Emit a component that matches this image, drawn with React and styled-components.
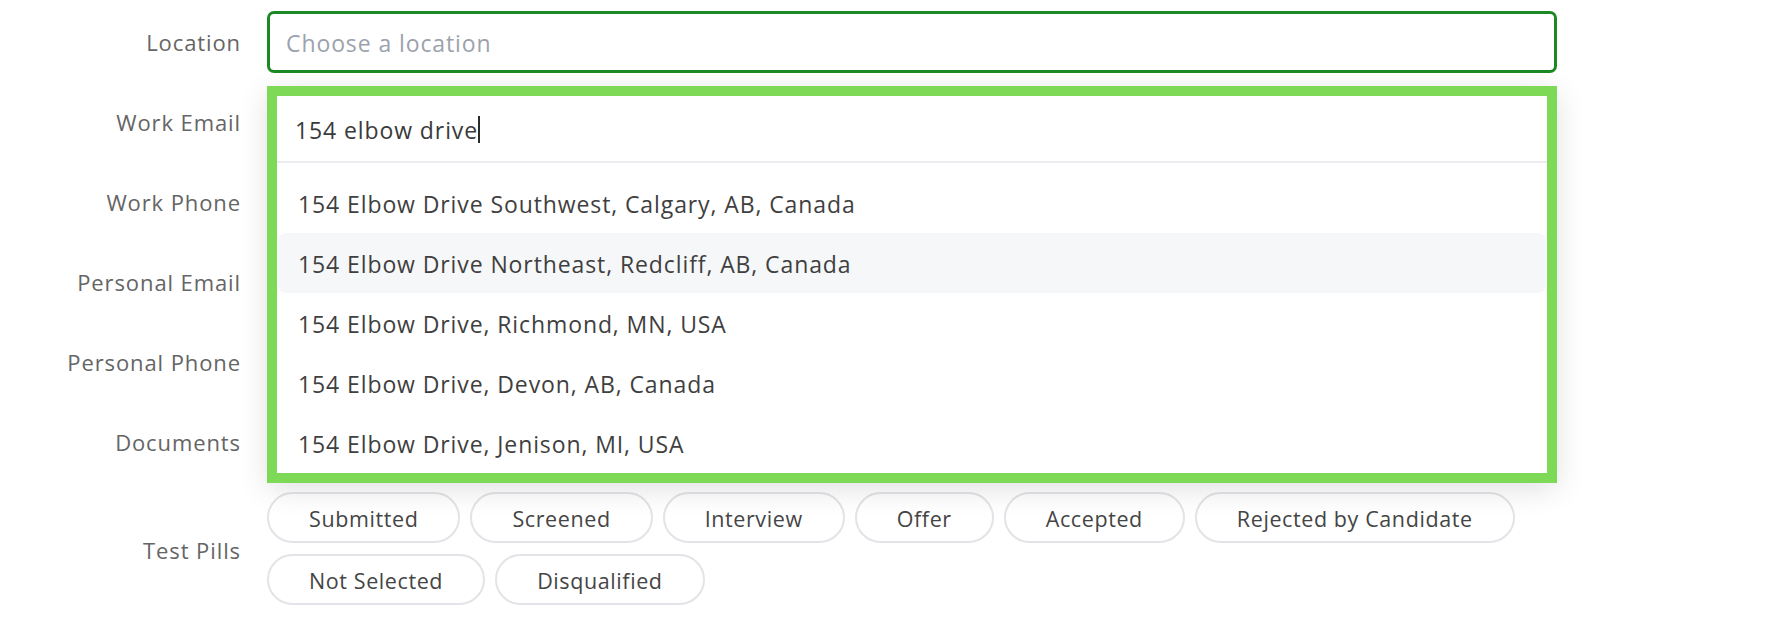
import styled, { createGlobalStyle } from 'styled-components';

const suggestions = [
  '154 Elbow Drive Southwest, Calgary, AB, Canada',
  '154 Elbow Drive Northeast, Redcliff, AB, Canada',
  '154 Elbow Drive, Richmond, MN, USA',
  '154 Elbow Drive, Devon, AB, Canada',
  '154 Elbow Drive, Jenison, MI, USA',
];

const pills = [
  'Submitted',
  'Screened',
  'Interview',
  'Offer',
  'Accepted',
  'Rejected by Candidate',
  'Not Selected',
  'Disqualified',
];

const hiddenFields = ['Work Email', 'Work Phone', 'Personal Email', 'Personal Phone', 'Documents'];

export default function App() {
  return (
    <>
      <GlobalStyle />
      <FormStyled>
        <RowStyled>
          <LabelStyled>Location</LabelStyled>
          <FieldStyled>
            <LocationInput placeholder="Choose a location" readOnly />
            <DropdownStyled>
              <SearchStyled>
                154 elbow drive
                <CaretStyled />
              </SearchStyled>
              <ListStyled>
                {suggestions.map((el, idx) => (
                  <OptionStyled key={idx} $active={idx === 1}>
                    {el}
                  </OptionStyled>
                ))}
              </ListStyled>
            </DropdownStyled>
          </FieldStyled>
        </RowStyled>
        {hiddenFields.map((el) => (
          <RowStyled key={el}>
            <LabelStyled>{el}</LabelStyled>
            <FieldStyled>
              <TextInput readOnly />
            </FieldStyled>
          </RowStyled>
        ))}
        <RowStyled>
          <LabelStyled>Test Pills</LabelStyled>
          <PillWrapStyled>
            {pills.map((el) => (
              <PillStyled key={el}>{el}</PillStyled>
            ))}
          </PillWrapStyled>
        </RowStyled>
      </FormStyled>
    </>
  );
}

const GlobalStyle = createGlobalStyle`
  body {
    margin: 0;
    background: #fff;
    font-family: "Open Sans", Lato, sans-serif;
  }
  * {
    box-sizing: border-box;
  }
`;

const FormStyled = styled.div`
  padding-top: 2px;
`;

const RowStyled = styled.div`
  display: grid;
  grid-template-columns: 241px 1290px;
  column-gap: 26px;
  align-items: center;
  min-height: 80px;
`;

const LabelStyled = styled.div`
  text-align: right;
  font-size: 22px;
  letter-spacing: 0.9px;
  color: #656565;
`;

const FieldStyled = styled.div`
  position: relative;
`;

const LocationInput = styled.input`
  display: block;
  width: 100%;
  height: 62px;
  padding: 2px 16px 0;
  font-family: inherit;
  font-size: 23px;
  letter-spacing: 0.9px;
  color: #3f3f3f;
  border: 3px solid #1c8a24;
  border-radius: 7px;
  outline: 0;
  &::placeholder {
    color: #9ba2ad;
  }
`;

const TextInput = styled.input`
  display: block;
  width: 100%;
  height: 62px;
  border: 2px solid #e2e2e7;
  border-radius: 7px;
`;

const DropdownStyled = styled.div`
  position: absolute;
  top: calc(100% + 13px);
  left: 0;
  width: 1290px;
  z-index: 10;
  background: #fff;
  border: 10px solid #7ed957;
  box-shadow: 0 6px 28px rgba(0, 0, 0, 0.12);
`;

const SearchStyled = styled.div`
  display: flex;
  align-items: center;
  height: 67px;
  padding: 2px 18px 0;
  font-size: 23px;
  letter-spacing: 0.9px;
  color: #3a3a3a;
  border-bottom: 2px solid #ebebf0;
`;

const CaretStyled = styled.span`
  display: inline-block;
  width: 2px;
  height: 27px;
  background: #2a2a2a;
`;

const ListStyled = styled.div`
  padding: 10px 1px 0;
`;

const OptionStyled = styled.div`
  display: flex;
  align-items: center;
  height: 60px;
  padding: 2px 20px 0;
  font-size: 23px;
  letter-spacing: 0.9px;
  color: #3f3f3f;
  border-radius: 8px;
  background: ${(p) => (p.$active ? '#f6f7f9' : 'transparent')};
`;

const PillWrapStyled = styled.div`
  display: flex;
  flex-wrap: wrap;
  gap: 11px 10px;
  padding: 10px 0 12px;
  width: 1260px;
`;

const PillStyled = styled.div`
  display: flex;
  align-items: center;
  height: 51px;
  padding: 1px 40px 0;
  font-size: 21.5px;
  letter-spacing: 0.6px;
  color: #454545;
  background: #fff;
  border: 2px solid #e3e3e8;
  border-radius: 999px;
`;
